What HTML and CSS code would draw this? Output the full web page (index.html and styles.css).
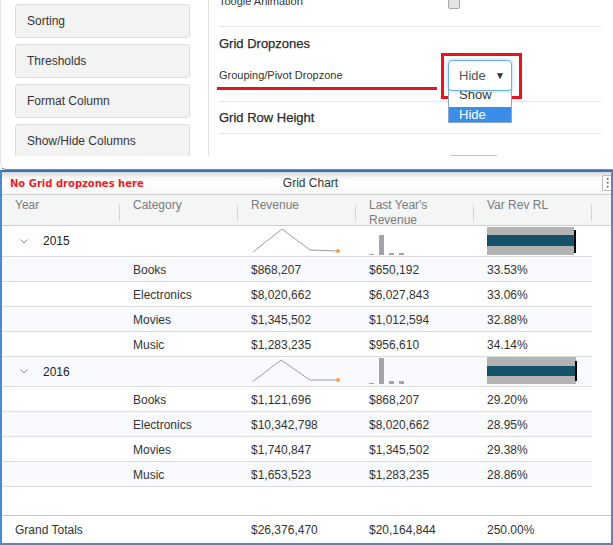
FILE: index.html
```html
<!DOCTYPE html>
<html>
<head>
<meta charset="utf-8">
<link rel="stylesheet" href="styles.css">
</head>
<body>
<div class="panel">
  <div class="panel-inner">
    <div class="sidebar">
      <div class="btn">Sorting</div>
      <div class="btn">Thresholds</div>
      <div class="btn">Format Column</div>
      <div class="btn">Show/Hide Columns</div>
    </div>
    <div class="pane">
      <div class="prow r-toggle"><span class="lbl">Toogle Animation</span><span class="chk"></span></div>
      <div class="heading h-dz">Grid Dropzones</div>
      <div class="prow r-dz">
        <span class="lbl lbl-dz">Grouping/Pivot Dropzone</span>
        <div class="selwrap">
          <div class="select"><span>Hide</span><span class="arrow">&#9660;</span></div>
          <div class="options">
            <div class="opt opt-show">Show</div>
            <div class="opt opt-sel">Hide</div>
          </div>
        </div>
      </div>
      <div class="heading h-rh">Grid Row Height</div>
      <div class="prow r-next"><span></span><div class="input"></div></div>
    </div>
  </div>
</div>
<div class="mark-line"></div>
<div class="mark-box"></div>

<div class="grid">
  <div class="titlebar">
    <span class="note">No Grid dropzones here</span>
    <span class="title">Grid Chart</span>
    <span class="menu"><svg width="3" height="12" viewBox="0 0 3 12"><rect x="1" y="1" width="1.5" height="1.5" fill="#555"/><rect x="1" y="5" width="1.5" height="1.5" fill="#555"/><rect x="1" y="9" width="1.5" height="1.5" fill="#555"/></svg></span>
  </div>
  <div class="head">
    <div class="hc">Year</div>
    <div class="hc">Category</div>
    <div class="hc">Revenue</div>
    <div class="hc">Last Year's<br>Revenue</div>
    <div class="hc">Var Rev RL</div>
  </div>

  <div class="row group">
    <div class="cell yr"><svg class="chev" width="8" height="5" viewBox="0 0 8 5"><polyline points="0.5,0.5 4,4 7.5,0.5" fill="none" stroke="#8a8a8a" stroke-width="1"/></svg>2015</div>
    <div class="cell"></div>
    <div class="cell pic"><svg width="118" height="30" viewBox="0 0 118 30"><polyline points="15,26 44,3 72,24 100,25" fill="none" stroke="#9c9c9c" stroke-width="1"/><circle cx="100" cy="25" r="2" fill="#f5a04a"/></svg></div>
    <div class="cell pic"><svg width="118" height="30" viewBox="0 0 118 30"><rect x="13" y="28" width="5" height="1" fill="#a3a4ab"/><rect x="23" y="9" width="5" height="20" fill="#a3a4ab"/><rect x="33" y="27" width="5" height="2" fill="#a3a4ab"/><rect x="43" y="27" width="5" height="2" fill="#a3a4ab"/></svg></div>
    <div class="cell pic"><svg width="118" height="30" viewBox="0 0 118 30"><rect x="13" y="1" width="87" height="28" fill="#b3b3b3"/><rect x="13" y="9" width="87" height="11" fill="#15526a"/><rect x="100" y="4" width="2" height="23" fill="#000"/></svg></div>
  </div>
  <div class="row alt"><div class="cell"></div><div class="cell">Books</div><div class="cell">$868,207</div><div class="cell">$650,192</div><div class="cell">33.53%</div></div>
  <div class="row"><div class="cell"></div><div class="cell">Electronics</div><div class="cell">$8,020,662</div><div class="cell">$6,027,843</div><div class="cell">33.06%</div></div>
  <div class="row alt"><div class="cell"></div><div class="cell">Movies</div><div class="cell">$1,345,502</div><div class="cell">$1,012,594</div><div class="cell">32.88%</div></div>
  <div class="row"><div class="cell"></div><div class="cell">Music</div><div class="cell">$1,283,235</div><div class="cell">$956,610</div><div class="cell">34.14%</div></div>

  <div class="row group g2 alt">
    <div class="cell yr"><svg class="chev" width="8" height="5" viewBox="0 0 8 5"><polyline points="0.5,0.5 4,4 7.5,0.5" fill="none" stroke="#8a8a8a" stroke-width="1"/></svg>2016</div>
    <div class="cell"></div>
    <div class="cell pic"><svg width="118" height="29" viewBox="0 0 118 29"><polyline points="15,24.5 43,3 72,23 100,23" fill="none" stroke="#9c9c9c" stroke-width="1"/><circle cx="100" cy="23" r="2" fill="#f5a04a"/></svg></div>
    <div class="cell pic"><svg width="118" height="29" viewBox="0 0 118 29"><rect x="13" y="26" width="5" height="1" fill="#a3a4ab"/><rect x="23" y="1" width="5" height="26" fill="#a3a4ab"/><rect x="33" y="24" width="5" height="3" fill="#a3a4ab"/><rect x="43" y="24" width="5" height="3" fill="#a3a4ab"/></svg></div>
    <div class="cell pic"><svg width="118" height="29" viewBox="0 0 118 29"><rect x="13" y="0" width="89" height="27" fill="#b3b3b3"/><rect x="13" y="9" width="89" height="10" fill="#15526a"/><rect x="101" y="4" width="2" height="20" fill="#000"/></svg></div>
  </div>
  <div class="row"><div class="cell"></div><div class="cell">Books</div><div class="cell">$1,121,696</div><div class="cell">$868,207</div><div class="cell">29.20%</div></div>
  <div class="row alt"><div class="cell"></div><div class="cell">Electronics</div><div class="cell">$10,342,798</div><div class="cell">$8,020,662</div><div class="cell">28.95%</div></div>
  <div class="row"><div class="cell"></div><div class="cell">Movies</div><div class="cell">$1,740,847</div><div class="cell">$1,345,502</div><div class="cell">29.38%</div></div>
  <div class="row alt"><div class="cell"></div><div class="cell">Music</div><div class="cell">$1,653,523</div><div class="cell">$1,283,235</div><div class="cell">28.86%</div></div>

  <div class="spacer"></div>
  <div class="foot">
    <div class="cell">Grand Totals</div><div class="cell"></div><div class="cell">$26,376,470</div><div class="cell">$20,164,844</div><div class="cell">250.00%</div>
  </div>
</div>
</body>
</html>
```
FILE: styles.css
```css
* { box-sizing: border-box; }
body {
  margin: 0;
  width: 613px;
  height: 545px;
  overflow: hidden;
  background: #fff;
  color: #333;
  font-family: "Liberation Sans", Arial, sans-serif;
  font-size: 12px;
}

/* top settings panel */
.panel {
  height: 170px;
  border-left: 1px solid #e4e4e4;
  border-bottom: 1px solid #8c8c8c;
  border-bottom-left-radius: 6px;
  background: #fff;
}
.panel-inner {
  height: 156px;
  display: flex;
  overflow: hidden;
}
.sidebar {
  width: 208px;
  flex: none;
  border-right: 1px solid #e3e3e3;
  padding: 4px 0 0 14px;
  display: flex;
  flex-direction: column;
  gap: 6px;
}
.btn {
  width: 175px;
  height: 34px;
  flex: none;
  background: #f3f3f3;
  border: 1px solid #dcdcdc;
  border-radius: 3px;
  padding-left: 11px;
  line-height: 32px;
  font-size: 12px;
  color: #333;
}
.pane {
  width: 382px;
  margin-left: 10px;
  flex: none;
}
.prow {
  display: grid;
  grid-template-columns: 229px 1fr;
  border-bottom: 1px solid #e6e6e6;
}
.lbl { font-size: 11px; color: #333; }
.r-toggle {
  margin-top: -5px;
  height: 32px;
  align-items: start;
}
.r-toggle .lbl { line-height: 13px; }
.chk {
  display: block;
  width: 12px;
  height: 12px;
  margin-top: 2px;
  background: #e4e4e4;
  border: 1px solid #a9a9a9;
  border-radius: 2px;
}
.heading {
  display: flex;
  align-items: center;
  font-size: 13px;
  color: #2b2b2b;
  -webkit-text-stroke: 0.25px #2b2b2b;
}
.h-dz { height: 33px; }
.h-rh { height: 32px; border-bottom: 1px solid #e6e6e6; }
.r-dz {
  height: 42px;
  align-items: start;
}
.lbl-dz { line-height: 31px; }
.selwrap { position: relative; width: 64px; }
.select {
  position: relative;
  z-index: 2;
  height: 31px;
  background: #fff;
  border: 1px solid #66afe9;
  border-radius: 4px;
  box-shadow: 0 0 4px rgba(102, 175, 233, 0.55);
  display: flex;
  align-items: center;
  justify-content: space-between;
  padding: 0 6px 0 10px;
  font-size: 13px;
  color: #555;
}
.arrow { font-size: 10px; color: #333; }
.options {
  position: absolute;
  z-index: 1;
  top: 29px;
  left: 0;
  width: 64px;
  background: #fff;
  border: 1px solid #8ea6c6;
}
.opt {
  font-size: 13px;
  padding-left: 10px;
}
.opt-show { height: 17px; line-height: 9px; color: #333; }
.opt-sel { height: 15px; line-height: 15px; background: #3a8ee8; color: #fff; }
.r-next { border-bottom: none; }
.input {
  width: 51px;
  height: 30px;
  margin-top: 21px;
  border: 1px solid #c4c4c4;
  border-radius: 3px;
}

/* red annotations drawn over the screenshot */
.mark-line {
  position: absolute;
  left: 217px;
  top: 87px;
  width: 220px;
  height: 3px;
  background: #e3141c;
}
.mark-box {
  position: absolute;
  left: 441px;
  top: 53px;
  width: 81px;
  height: 46px;
  border: 3px solid #e8131b;
}

/* grid widget */
.grid {
  height: 375px;
  border: 2px solid #4a8ad3;
  border-top-color: #3d6eae;
}
.titlebar {
  height: 23px;
  border-bottom: 1px solid #d2d2d2;
  background: linear-gradient(#d6d6d6, #fafafa 6px, #fff 10px, #f7f7f7);
  display: grid;
  grid-template-columns: 1fr auto 1fr;
  align-items: center;
  padding-left: 8px;
}
.note {
  font-family: "DejaVu Sans", Verdana, sans-serif;
  font-weight: bold;
  font-size: 10px;
  color: #ee1c25;
}
.title { font-size: 12px; color: #333; }
.menu {
  justify-self: end;
  width: 9px;
  height: 16px;
  border: 1px solid #bdbdbd;
  border-right: none;
  border-radius: 2px 0 0 2px;
  background: #fff;
  display: flex;
  align-items: center;
  justify-content: center;
}
.menu svg { display: block; }
.head {
  height: 31px;
  background: #f4f5f5;
  border-bottom: 1px solid #cfcfcf;
  display: grid;
  grid-template-columns: repeat(5, 118px) 1fr;
}
.hc {
  position: relative;
  padding: 3px 0 0 13px;
  line-height: 15px;
  font-size: 12px;
  color: #7b7b7b;
}
.hc::after {
  content: "";
  position: absolute;
  right: 0;
  top: 10px;
  width: 1px;
  height: 16px;
  background: #d3d3d3;
}
.row {
  width: 590px;
  height: 25px;
  display: grid;
  grid-template-columns: repeat(5, 118px);
  align-items: center;
  padding-top: 2px;
  border-bottom: 1px solid #dcdcdc;
  background: #fff;
}
.row.alt { background: #f9fafd; }
.row.group { height: 31px; align-items: stretch; padding-top: 0; }
.row.group.g2 { height: 30px; }
.cell {
  padding-left: 13px;
  font-size: 12px;
  color: #333;
  white-space: nowrap;
}
.cell.yr {
  display: flex;
  align-items: center;
  color: #222;
}
.chev { display: block; margin: 0 15px 0 5px; }
.cell.pic { padding: 0; }
.cell.pic svg { display: block; }
.spacer { height: 28px; }
.foot {
  height: 28px;
  border-top: 1px solid #c8c8c8;
  display: grid;
  grid-template-columns: repeat(5, 118px);
  align-items: center;
}
```
